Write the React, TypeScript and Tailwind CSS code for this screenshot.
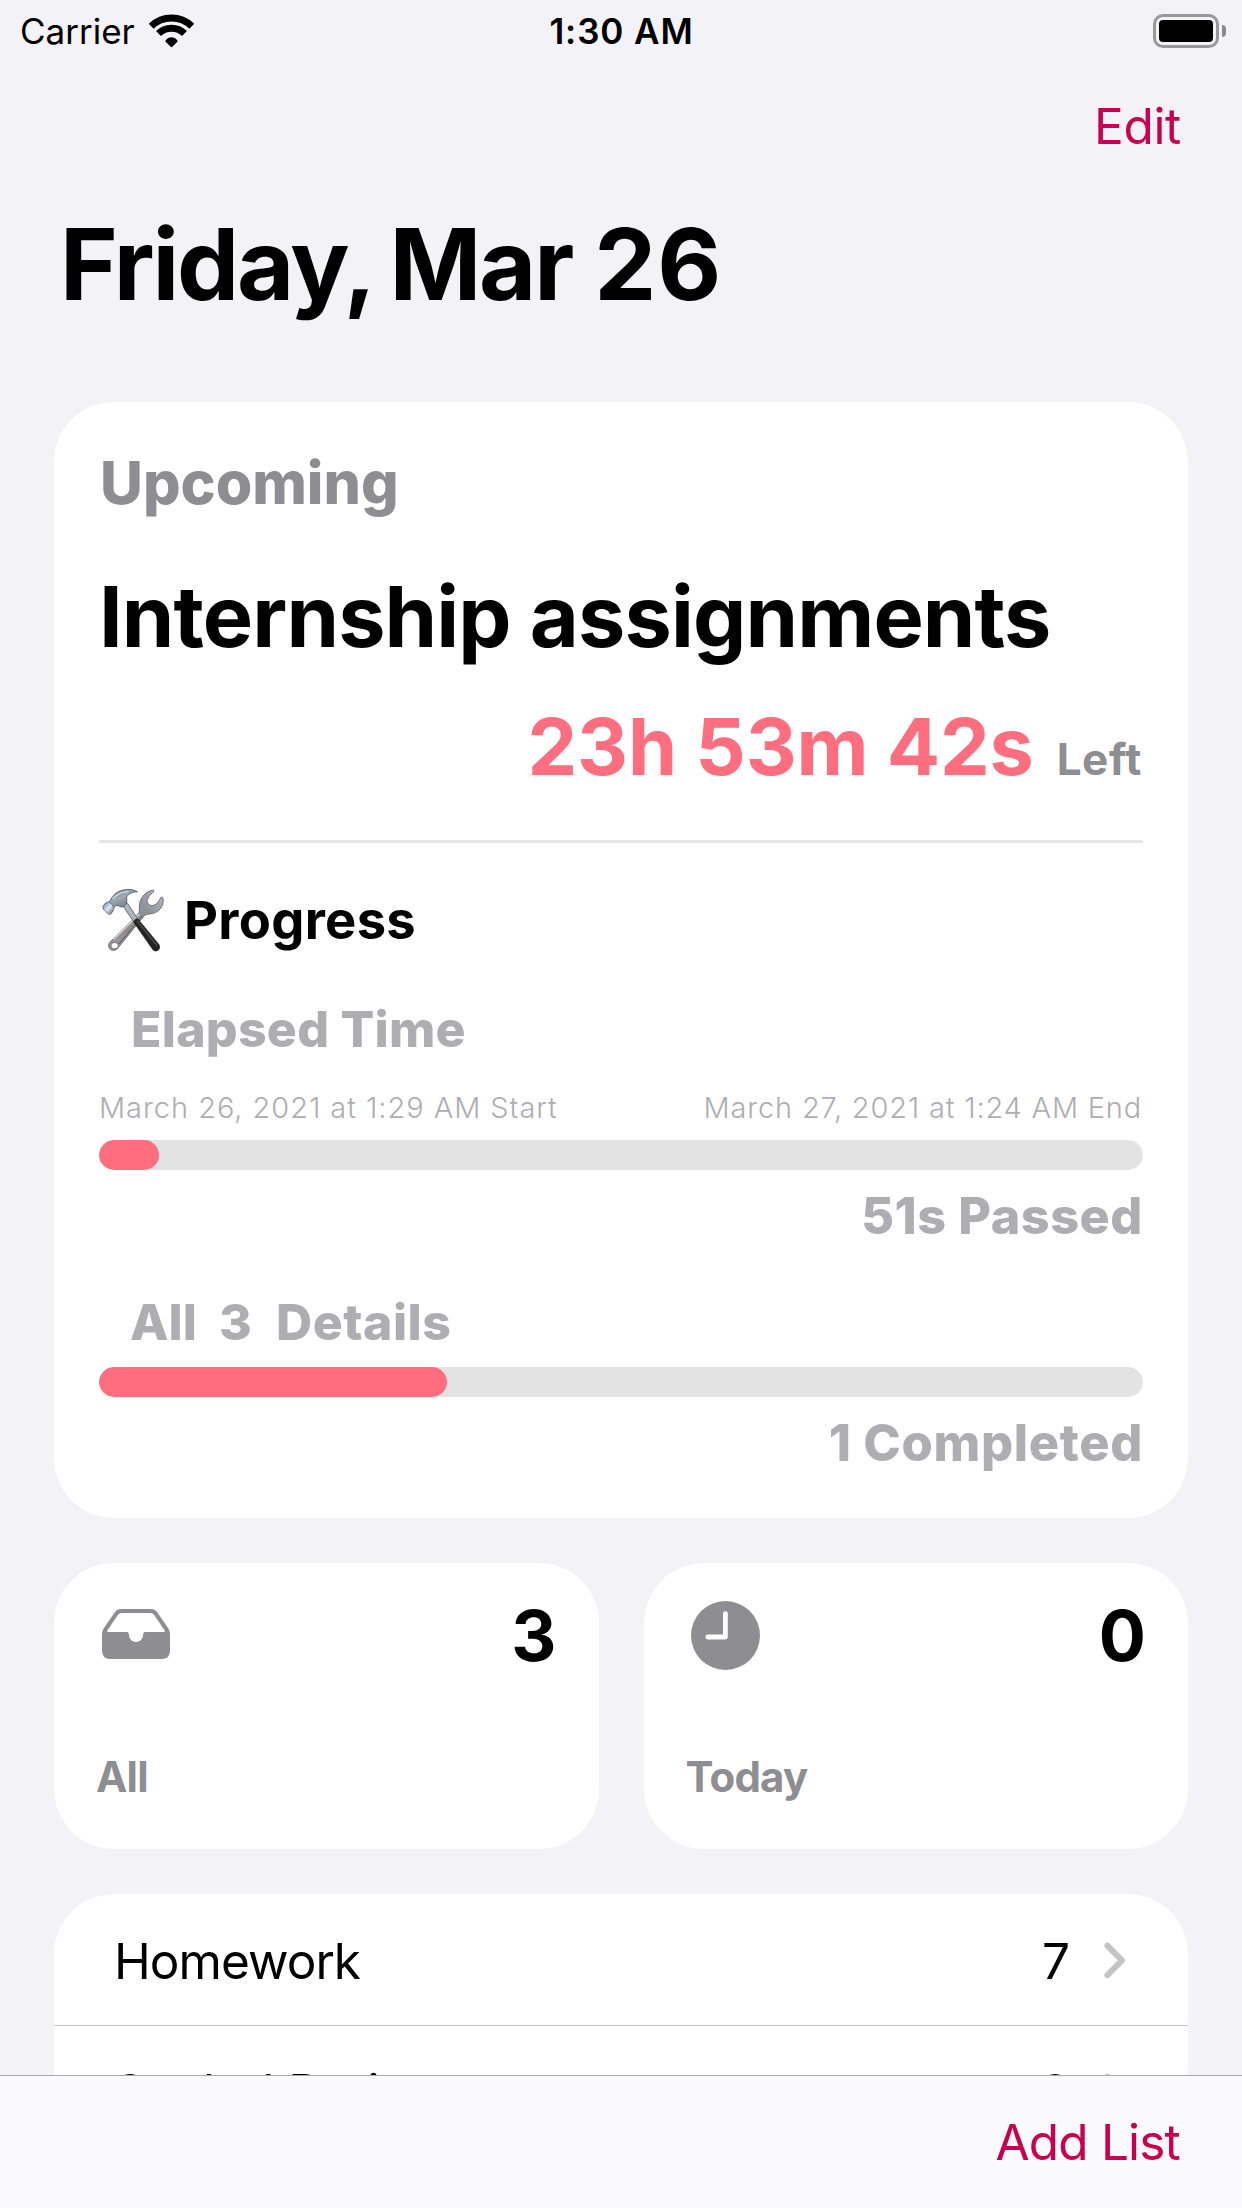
import React from "react";

function WifiIcon() {
  return (
    <svg width="45" height="34" viewBox="0 0 45 34" fill="none">
      <path d="M2.2 12.2A29 29 0 0 1 42.8 12.2" stroke="#000" strokeWidth="7" />
      <path d="M9.5 19.6A18.7 18.7 0 0 1 35.5 19.6" stroke="#000" strokeWidth="7" />
      <path
        d="M16.6 26.6C19.8 22.2 25.2 22.2 28.4 26.6Q28.9 27.2 28.4 27.7L23 32.9Q22.5 33.4 22 32.9L16.6 27.7Q16.1 27.2 16.6 26.6Z"
        fill="#000"
      />
    </svg>
  );
}

function BatteryIcon() {
  return (
    <div className="flex items-center gap-[3px]">
      <div className="h-[34px] w-[66px] rounded-[10px] border-[3px] border-[#98989b] p-[3px]">
        <div className="h-full w-full rounded-[4px] bg-black" />
      </div>
      <div className="h-3 w-1 rounded-r-full bg-[#8a8a8d]" />
    </div>
  );
}

function ToolsIcon() {
  return (
    <svg width="62" height="63" viewBox="0 0 62 63" className="shrink-0">
      <defs>
        <linearGradient id="wrench" x1="0" y1="1" x2="1" y2="0">
          <stop offset="0" stopColor="#a09c9f" />
          <stop offset="0.35" stopColor="#8f8b90" />
          <stop offset="0.7" stopColor="#8d959f" />
          <stop offset="1" stopColor="#b4bcc6" />
        </linearGradient>
        <linearGradient id="hammer" x1="0" y1="0" x2="0.6" y2="1">
          <stop offset="0" stopColor="#6f7f90" />
          <stop offset="0.5" stopColor="#9fa8b1" />
          <stop offset="1" stopColor="#777a80" />
        </linearGradient>
        <linearGradient id="face" x1="0" y1="0" x2="1" y2="1">
          <stop offset="0" stopColor="#4d6e93" />
          <stop offset="0.5" stopColor="#d9ecf7" />
          <stop offset="1" stopColor="#4c5766" />
        </linearGradient>
      </defs>
      <path
        d="M50.5 1.2Q52.5 1 51.8 2.8C47.8 5.6 45.2 9.5 45.2 12.5C46 15.5 48.5 17.2 51.2 16.6C55 15.4 57.5 12 58.6 8.6Q59.8 7.2 61 9.2C62.4 17.5 56.5 24.5 47.5 25Q44 25 42 27L16.5 58.2C14 62 9.4 62.6 7.4 59.2C5.6 56.6 7 53.4 10 51.2L34 27.5Q38.4 23.5 37.4 19.5C36.6 10 42.5 3 50.5 1.2ZM12.6 53.6A3.1 3.1 0 1 0 12.7 59.7A3.1 3.1 0 1 0 12.6 53.6Z"
        fill="url(#wrench)"
        stroke="#6f6569"
        strokeWidth="0.9"
        fillRule="evenodd"
      />
      <path d="M12 50L37 25.5" stroke="#d5d3d6" strokeWidth="1.4" strokeLinecap="round" />
      <path d="M17 55L40 27" stroke="#6a5459" strokeWidth="1" strokeLinecap="round" />
      <path d="M20 15.5L25 13.5L35.5 29.5L31.5 32.5Z" fill="#aeb5bb" stroke="#62666d" strokeWidth="0.9" />
      <path
        d="M6.5 14.5C8 11.5 11.5 5 16.5 2.6C21.5 0.2 30.5-0.6 35.4 2.8C31 3 26.5 4.2 24.6 8.2Q25.5 11.5 23.8 15.6Q20.5 20 16.2 16.4Q13.6 15.8 11.5 19Z"
        fill="url(#hammer)"
        stroke="#4f5b68"
        strokeWidth="0.9"
      />
      <path d="M11 9.5Q16 3.5 26 2.4" stroke="#c7d1d9" strokeWidth="1.6" fill="none" strokeLinecap="round" />
      <path
        d="M0.8 17.5Q3 13 7 12.8Q11 15.6 12 19.4Q10.8 24 7.8 25.6Q4.8 24.6 3.8 22.2Q0.4 21 0.8 17.5Z"
        fill="url(#face)"
        stroke="#5a6879"
        strokeWidth="0.8"
      />
      <path d="M31 32.8Q32.6 29.8 35.6 29.3L57.3 55.4Q59 59 56.2 61.6Q53.2 63.6 50.6 60.8Z" fill="#242424" />
      <path d="M35.5 32.5L54.5 56" stroke="#484848" strokeWidth="1.8" strokeLinecap="round" />
    </svg>
  );
}

function TrayIcon() {
  return (
    <svg width="68" height="50" viewBox="0 0 68 50" className="mb-[2px] ml-px">
      <path
        fill="#8e8d92"
        fillRule="evenodd"
        d="M0 25Q0 21.8 1.6 19.4L12.6 3.4Q15 0 19.4 0H48.6Q53 0 55.4 3.4L66.4 19.4Q68 21.8 68 25V41.5Q68 50 59.5 50H8.5Q0 50 0 41.5ZM5.3 21.4L16.2 5.6Q17.4 4 19.8 4H48.2Q50.6 4 51.8 5.6L62.7 21.4Q63.4 23 62 23H43Q41.4 23 41.2 25C41 30.2 38 33 34 33C30 33 27 30.2 26.8 25Q26.6 23 25 23H6Q4.6 23 5.3 21.4Z"
      />
    </svg>
  );
}

function ClockIcon() {
  return (
    <svg width="69" height="69" viewBox="0 0 69 69">
      <circle cx="34.5" cy="34.5" r="34.5" fill="#8e8d92" />
      <path d="M34.4 12.6V36H16.8" fill="none" stroke="#fff" strokeWidth="4.8" strokeLinecap="round" strokeLinejoin="round" />
    </svg>
  );
}

function Chevron() {
  return (
    <svg width="22" height="37" viewBox="0 0 22 37" fill="none" className="mb-[2px]">
      <path d="M3.4 3.6L18 18.4L3.4 33.2" stroke="#c4c4c6" strokeWidth="6" strokeLinecap="round" strokeLinejoin="round" />
    </svg>
  );
}

function ProgressBar({ value }: { value: number }) {
  return (
    <div className="h-[30px] w-full overflow-hidden rounded-full bg-[#e3e3e4]">
      <div className="h-full rounded-full bg-[#ff6e7f]" style={{ width: `${value}px` }} />
    </div>
  );
}

function StatCard({ icon, count, label }: { icon: React.ReactNode; count: number; label: string }) {
  return (
    <div className="h-[286px] rounded-[60px] bg-white pl-[42px] pr-[42px] pt-8">
      <div className="flex h-20 items-center justify-between pl-[5px]">
        {icon}
        <span className="pt-px text-[70px] font-bold leading-[80px]">{count}</span>
      </div>
      <div className="mt-[77px] text-[42px] font-bold leading-[50px] tracking-[-0.8px] text-[#8e8d92]">{label}</div>
    </div>
  );
}

function ListRow({ name, count }: { name: React.ReactNode; count: number }) {
  return (
    <div className="flex h-[132px] items-center pl-[60px] pr-[62px] text-[49.5px] leading-[60px]">
      <span className="flex-1 tracking-[-0.95px]">{name}</span>
      <span className="mr-[34px]">{count}</span>
      <Chevron />
    </div>
  );
}

export default function App() {
  return (
    <div className="flex h-[2208px] w-[1242px] flex-col overflow-hidden bg-[#f2f2f7] font-[Inter,sans-serif] text-black">
      <main className="min-h-0 flex-1 overflow-hidden">
        <div className="grid h-[62px] grid-cols-3 items-center pl-5 pr-4 text-[35px] leading-[62px]">
          <div className="flex items-center gap-[14px]">
            <span>Carrier</span>
            <WifiIcon />
          </div>
          <span className="pr-[3px] text-center font-semibold tracking-[0.9px]">1:30 AM</span>
          <div className="flex justify-end">
            <BatteryIcon />
          </div>
        </div>

        <div className="flex h-32 items-center justify-end pr-[61px] text-[49.5px] leading-[60px] tracking-[-0.3px] text-[#c8004f]">
          Edit
        </div>

        <h1 className="pl-[60px] text-[98.6px] font-bold leading-[148px] tracking-[-2.2px] [word-spacing:-3px]">
          Friday, Mar <span className="ml-1 tracking-[1px]">26</span>
        </h1>

        <div className="mt-16 flex flex-col gap-[45px] px-[54px]">
          <section className="rounded-[60px] bg-white px-[45px] pb-[45px] pt-[50px]">
            <div className="pl-px text-[59px] font-extrabold leading-[61px] text-[#8e8d92]">Upcoming</div>
            <h2 className="mt-[53px] whitespace-nowrap text-[84.5px] font-bold leading-[101px] tracking-[-0.88px]">
              Internship assignments
            </h2>
            <div className="mt-10 flex h-[79px] items-baseline justify-end pr-px">
              <span className="text-[79px] font-bold leading-[79px] tracking-[-0.21px] text-[#ff6e7f]">23h 53m 42s</span>
              <span className="ml-[23px] text-[44px] font-bold leading-[50px] tracking-[0.6px] text-[#8e8d92]">Left</span>
            </div>
            <div className="mt-[54px] h-[3px] bg-[#e5e5ea]" />

            <div className="mt-[45px] flex h-16 items-center gap-5 pl-[3px]">
              <ToolsIcon />
              <h3 className="text-[52.5px] font-bold leading-[64px] tracking-[0.3px]">Progress</h3>
            </div>

            <div className="text-[#aeadb2]">
              <div className="mt-[47px] pl-8 text-[50px] font-extrabold leading-[60px] tracking-[0.25px]">Elapsed Time</div>
              <div className="mt-[31px] flex justify-between pr-px text-[29px] font-light leading-[35px]">
                <span className="tracking-[0.95px]">March 26, 2021 at 1:29 AM Start</span>
                <span className="tracking-[0.81px]">March 27, 2021 at 1:24 AM End</span>
              </div>
              <div className="mt-[15px]">
                <ProgressBar value={60} />
              </div>
              <div className="mt-4 text-right text-[50.3px] font-extrabold leading-[60px] tracking-[0.55px]">51s Passed</div>

              <div className="mt-[46px] flex pl-[31px] text-[50px] font-extrabold leading-[60px]">
                <span className="w-[89px]">All</span>
                <span className="w-[57px]">3</span>
                <span className="tracking-[0.5px]">Details</span>
              </div>
              <div className="mt-[15px]">
                <ProgressBar value={348} />
              </div>
              <div className="mt-4 text-right text-[50.5px] font-extrabold leading-[60px] tracking-[0.65px]">1 Completed</div>
            </div>
          </section>

          <section className="grid grid-cols-2 gap-[45px]">
            <StatCard icon={<TrayIcon />} count={3} label="All" />
            <StatCard icon={<ClockIcon />} count={0} label="Today" />
          </section>

          <section className="overflow-hidden rounded-[60px] bg-white">
            <div className="border-b border-[#c6c6c8] pt-px [&>div]:h-[130px] [&>div]:pt-[2px]">
              <ListRow name="Homework" count={7} />
            </div>
            <ListRow name={<span className="tracking-[0.05px]">Sealed Project</span>} count={3} />
          </section>
        </div>
      </main>

      <footer className="flex h-[133px] items-center justify-end border-t border-[#a9a9ad] bg-[#fafafc] pr-[62px] text-[49.5px] leading-[60px] tracking-[-0.8px] text-[#c8004f]">
        Add List
      </footer>
    </div>
  );
}
